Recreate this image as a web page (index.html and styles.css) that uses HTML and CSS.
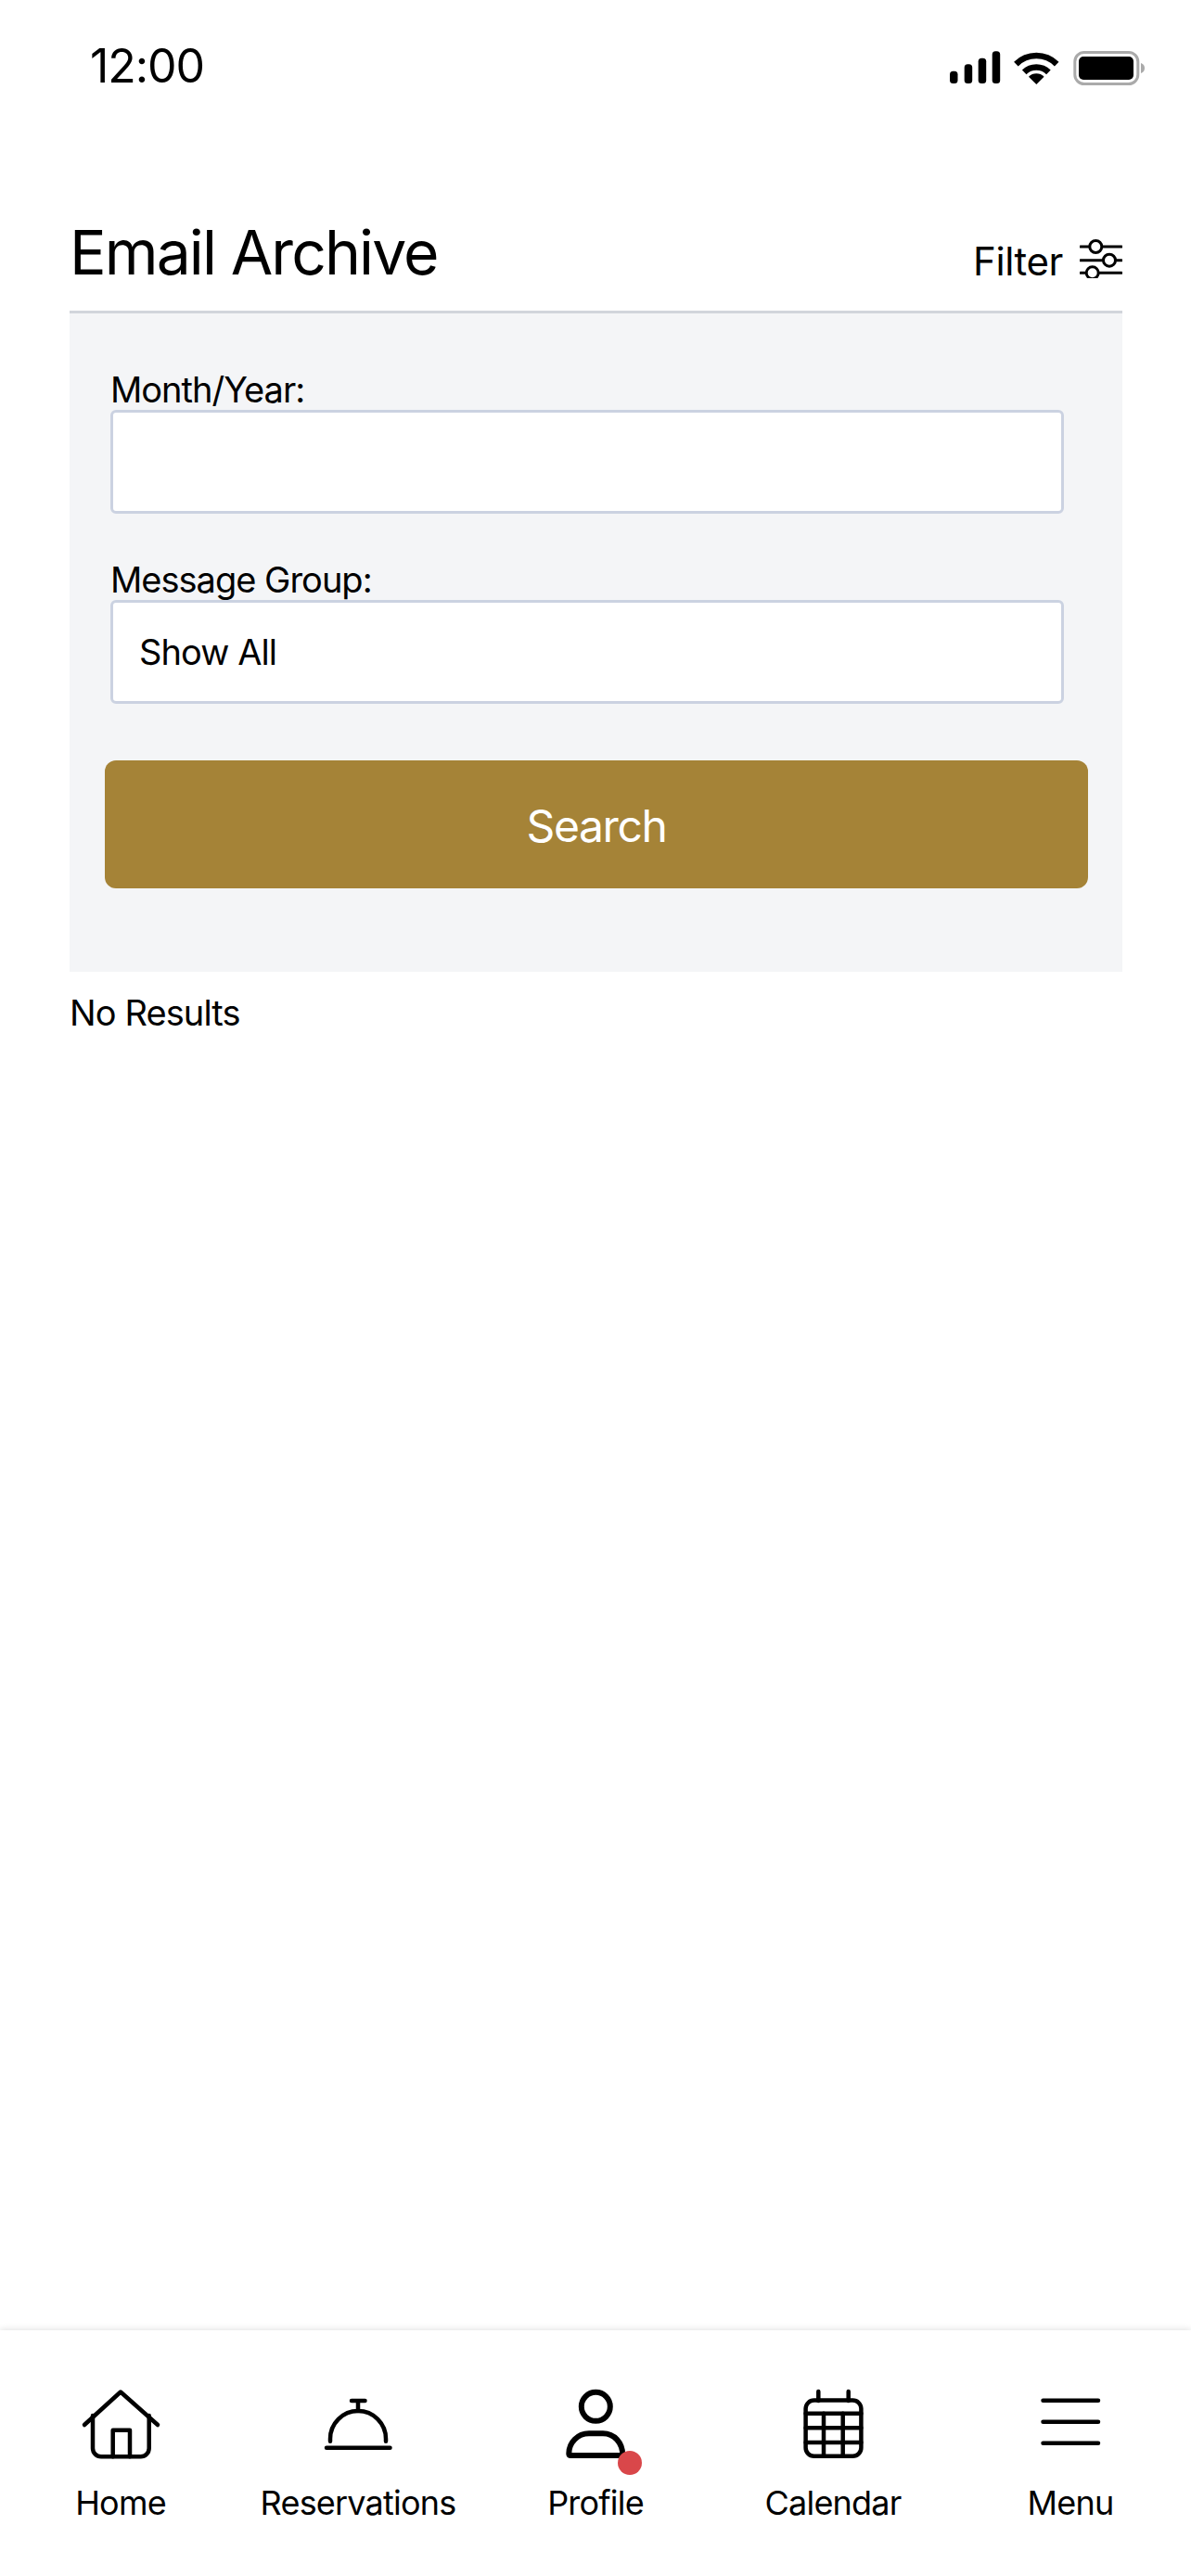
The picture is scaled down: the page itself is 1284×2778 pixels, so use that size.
FILE: index.html
```html
<!DOCTYPE html>
<html lang="en">
<head>
<meta charset="utf-8">
<title>Email Archive</title>
<link rel="stylesheet" href="styles.css">
</head>
<body>
<header class="status-bar">
  <span class="clock">12:00</span>
  <svg class="status-icons" width="211" height="38" viewBox="0 0 211 38" aria-hidden="true">
    <rect x="0" y="22.7" width="8.5" height="13.3" rx="3.5"/>
    <rect x="15.7" y="15.3" width="8.5" height="20.7" rx="3.5"/>
    <rect x="30.7" y="8.7" width="8.5" height="27.3" rx="3.5"/>
    <rect x="45.7" y="1.3" width="8.5" height="34.7" rx="3.5"/>
    <path class="wifi-arc" d="M71.4 15.1A31 31 0 0 1 115.2 15.1"/>
    <path class="wifi-arc" d="M80.200 23.900A18.500 18.500 0 0 1 106.400 23.900"/>
    <path d="M93.300 37L85 28.700A11.700 11.700 0 0 1 101.600 28.700Z"/>
    <rect class="battery-case" x="134.8" y="2.5" width="68" height="34" rx="10"/>
    <rect x="139" y="7" width="59" height="25" rx="5"/>
    <path class="battery-nub" d="M206 14c3 1 4 3 4 5.500s-1 4.500-4 5.500z"/>
  </svg>
</header>

<main class="page">
  <div class="page-head">
    <h1 class="page-title">Email Archive</h1>
    <button class="filter-toggle" type="button">
      Filter
      <svg class="filter-icon" width="46" height="44" viewBox="0 0 46 44" aria-hidden="true">
        <path d="M1 10H45M1 24.700H45M1 38.300H45"/>
        <circle cx="17.300" cy="10" r="6.500"/>
        <circle cx="32" cy="24.700" r="6.500"/>
        <circle cx="13.700" cy="38.300" r="6.500"/>
      </svg>
    </button>
  </div>

  <form class="filter-panel">
    <div class="field">
      <label class="field-label" for="month-year">Month/Year:</label>
      <input class="field-control" id="month-year" type="text">
    </div>
    <div class="field">
      <label class="field-label" for="message-group">Message Group:</label>
      <select class="field-control" id="message-group">
        <option>Show All</option>
      </select>
    </div>
    <button class="search-button" type="button">Search</button>
  </form>

  <p class="no-results">No Results</p>
</main>

<nav class="tab-bar">
  <a class="tab" href="#">
    <span class="tab-icon">
      <svg width="100" height="90" viewBox="0 0 100 90" aria-hidden="true">
        <path d="M11 45L50 9.500L90 45"/>
        <path d="M20 35V70.300A9 9 0 0 0 29 79.300H71.700A9 9 0 0 0 80.700 70.300V35"/>
        <path d="M41.700 79.300V50.700H60V79.300"/>
      </svg>
    </span>
    <span class="tab-label">Home</span>
  </a>
  <a class="tab" href="#">
    <span class="tab-icon">
      <svg width="100" height="90" viewBox="0 0 100 90" aria-hidden="true">
        <path d="M16 69.700H84.500"/>
        <path d="M20 62.700V60A30 30 0 0 1 80 60V62.700"/>
        <path d="M50 30V19M43 19H57.500"/>
      </svg>
    </span>
    <span class="tab-label">Reservations</span>
  </a>
  <a class="tab" href="#">
    <span class="tab-icon">
      <svg class="icon-bold" width="100" height="90" viewBox="0 0 100 90" aria-hidden="true">
        <circle cx="50.300" cy="25.300" r="15.500"/>
        <path d="M21.300 76C21.300 64 31 54.300 43 54.300H58C70 54.300 79.300 64 79.300 78H23.300Q21.300 78 21.300 76Z"/>
      </svg>
      <span class="tab-badge"></span>
    </span>
    <span class="tab-label">Profile</span>
  </a>
  <a class="tab" href="#">
    <span class="tab-icon">
      <svg width="100" height="90" viewBox="0 0 100 90" aria-hidden="true">
        <rect x="20.600" y="18.600" width="59.800" height="60.100" rx="9"/>
        <path d="M34.300 9V19M66.700 9V19"/>
        <path d="M20.600 32.700H80.400M20.600 48.300H80.400M20.600 64H80.400"/>
        <path d="M40 32.700V78.700M60.700 32.700V78.700"/>
      </svg>
    </span>
    <span class="tab-label">Calendar</span>
  </a>
  <a class="tab" href="#">
    <span class="tab-icon">
      <svg width="100" height="90" viewBox="0 0 100 90" aria-hidden="true">
        <path d="M20.500 18.700H80M20.500 41.700H80M20.500 64.700H80"/>
      </svg>
    </span>
    <span class="tab-label">Menu</span>
  </a>
</nav>
</body>
</html>
```
FILE: styles.css
```css
* {
  box-sizing: border-box;
}

html,
body {
  margin: 0;
  height: 100%;
}

body {
  display: flex;
  flex-direction: column;
  height: 2778px;
  background: #fff;
  color: #000;
  font-family: Inter, "Liberation Sans", sans-serif;
}

/* Status bar */
.status-bar {
  display: flex;
  justify-content: space-between;
  align-items: flex-start;
  height: 232px;
  padding: 41px 49px 0 97px;
}

.clock {
  font-size: 50px;
  line-height: 60px;
  letter-spacing: -1.1px;
}

.status-icons {
  margin-top: 13px;
  fill: #000;
}

.wifi-arc {
  fill: none;
  stroke: #000;
  stroke-width: 6.5;
}

.battery-case {
  fill: none;
  stroke: #aaa;
  stroke-width: 3;
}

.battery-nub {
  fill: #aaa;
}

/* Page body */
.page {
  flex: 1;
  padding: 0 74px 0 75px;
}

.page-head {
  display: flex;
  justify-content: space-between;
  align-items: flex-end;
  padding-bottom: 23px;
  border-bottom: 3px solid #d1d5db;
}

.page-title {
  margin: 0;
  font-size: 66px;
  font-weight: 400;
  line-height: 80px;
  letter-spacing: -1.9px;
}

.filter-toggle {
  display: inline-flex;
  align-items: flex-start;
  gap: 18px;
  margin-bottom: 5px;
  padding: 0;
  border: 0;
  background: none;
  color: inherit;
  font: inherit;
  font-size: 42px;
  line-height: 50px;
  letter-spacing: -0.4px;
}

.filter-icon {
  margin-top: -1px;
  fill: #fff;
  stroke: #000;
  stroke-width: 3;
  stroke-linecap: round;
}

.filter-panel {
  display: flex;
  flex-direction: column;
  padding: 60px 37px 90px 38px;
  background: #f4f5f7;
}

.field {
  display: flex;
  flex-direction: column;
  padding: 0 26px 0 6px;
  margin-bottom: 49px;
}

.field-label {
  font-size: 38px;
  line-height: 44px;
  letter-spacing: -1px;
}

.field-control {
  display: block;
  width: 100%;
  height: 112px;
  padding: 0 28px;
  border: 3px solid #cbd2e1;
  border-radius: 6px;
  background: #fff;
  color: #000;
  font: inherit;
  font-size: 38px;
  letter-spacing: -0.9px;
  appearance: none;
}

.search-button {
  height: 138px;
  margin-top: 12px;
  padding: 2px 0 0;
  border: 0;
  border-radius: 12px;
  background: #a58337;
  color: #fff;
  font: inherit;
  font-size: 48px;
  letter-spacing: -1.4px;
}

.no-results {
  margin: 21px 0 0;
  font-size: 38px;
  line-height: 46px;
  letter-spacing: -0.9px;
}

/* Bottom tab bar */
.tab-bar {
  display: grid;
  grid-template-columns: repeat(5, 1fr);
  height: 265px;
  padding: 57px 2px 0;
  background: #fff;
  box-shadow: 0 -1px 7px rgba(0, 0, 0, 0.12);
}

.tab {
  display: flex;
  flex-direction: column;
  align-items: center;
  color: inherit;
  text-decoration: none;
}

.tab-icon {
  position: relative;
  display: block;
  width: 100px;
  height: 90px;
}

.tab-icon svg {
  display: block;
  fill: none;
  stroke: #000;
  stroke-width: 4.5;
  stroke-linecap: round;
  stroke-linejoin: round;
}

.tab-icon .icon-bold {
  stroke-width: 6;
}

.tab-badge {
  position: absolute;
  left: 74px;
  top: 73px;
  width: 26px;
  height: 26px;
  border-radius: 50%;
  background: #d9474a;
}

.tab-label {
  margin-top: 17px;
  font-size: 36px;
  line-height: 44px;
  letter-spacing: -0.8px;
}
```
